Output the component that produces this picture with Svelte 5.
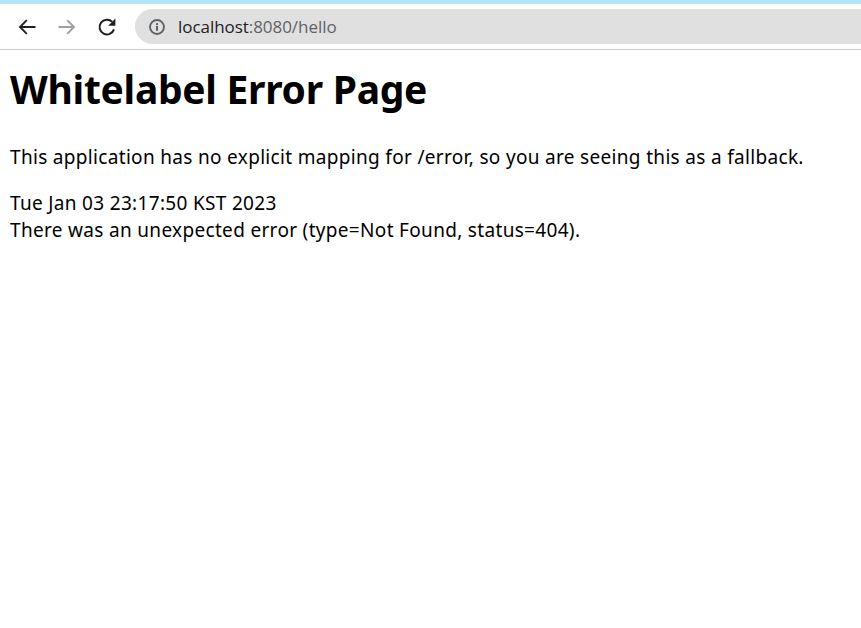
<script>
  const host = 'localhost';
  const rest = ':8080/hello';
</script>

<div class="strip"></div>
<header class="toolbar">
  <nav class="buttons">
    <svg class="icon" viewBox="0 0 20 20" width="20" height="20"><path d="M18.5 10H3.5M9.8 3.2L3 10l6.8 6.8" fill="none" stroke="#1f1f1f" stroke-width="1.9"/></svg>
    <svg class="icon" viewBox="0 0 20 20" width="20" height="20"><path d="M1.5 10H16.5M10.2 3.2L17 10l-6.8 6.8" fill="none" stroke="#a0a0a0" stroke-width="1.9"/></svg>
    <svg class="icon" viewBox="0 0 20 20" width="20" height="20"><path d="M17 12.4A7.4 7.4 0 1 1 15.2 4.8" fill="none" stroke="#1f1f1f" stroke-width="2"/><path d="M18.4 1.6V8.8H11.2Z" fill="#1f1f1f"/></svg>
  </nav>
  <div class="omnibox">
    <svg class="info" viewBox="0 0 16 16" width="16" height="16"><circle cx="8" cy="8" r="7" fill="none" stroke="#5f6368" stroke-width="1.9"/><rect x="7" y="7" width="2" height="4.8" fill="#5f6368"/><rect x="7" y="4.1" width="2" height="2" fill="#5f6368"/></svg>
    <span class="url"><span class="host">{host}</span>{rest}</span>
  </div>
</header>

<main>
  <h1>Whitelabel Error Page</h1>
  <p>This application has no explicit mapping for /error, so you are seeing this as a fallback.</p>
  <div>Tue Jan 03 23:17:50 KST 2023</div>
  <div>There was an unexpected error (type=Not Found, status=404).</div>
</main>

<style>
  :global(body) {
    margin: 0;
    background: #fff;
    color: #000;
    font-family: "Noto Sans", "Noto Sans CJK KR", sans-serif;
  }
  .strip {
    height: 4px;
    background: #b5e6f3;
  }
  .toolbar {
    display: flex;
    align-items: center;
    height: 45px;
    border-bottom: 1px solid #ccc;
    overflow: hidden;
  }
  .buttons {
    display: flex;
    gap: 20px;
    padding-left: 17px;
    width: 118px;
    flex: none;
  }
  .icon {
    display: block;
  }
  .omnibox {
    flex: 1;
    display: flex;
    align-items: center;
    height: 35px;
    margin-right: -20px;
    padding-left: 14px;
    gap: 13px;
    background: #e0e0e0;
    border-radius: 18px;
  }
  .info {
    flex: none;
  }
  .url {
    font-family: "Open Sans", sans-serif;
    font-size: 17px;
    letter-spacing: -0.05px;
    color: #5f6368;
  }
  .host {
    color: #202124;
  }
  main {
    padding: 0 10px;
    font-size: 19px;
    line-height: 27px;
    letter-spacing: 0.32px;
  }
  h1 {
    margin: 0;
    padding-top: 13px;
    font-size: 39px;
    line-height: 52px;
    font-weight: 700;
    letter-spacing: -0.28px;
  }
  p {
    margin: 29px 0 19px;
  }
</style>
